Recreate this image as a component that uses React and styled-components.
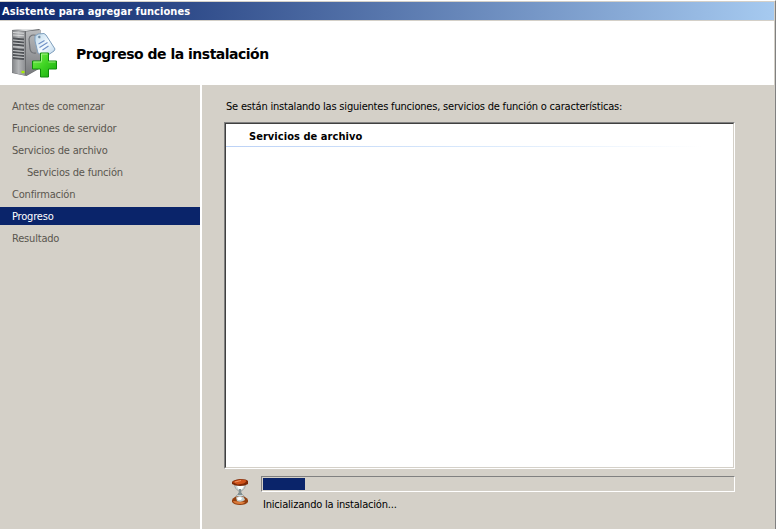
import React from "react";
import styled, { createGlobalStyle } from "styled-components";

const GlobalStyle = createGlobalStyle`
  * { box-sizing: border-box; }
  body {
    margin: 0;
    background: #d4d0c8;
    overflow: hidden;
    font-family: "DejaVu Sans Condensed", "DejaVu Sans", Tahoma, sans-serif;
    font-stretch: condensed;
    font-size: 11px;
    letter-spacing: -0.19px;
    color: #000;
  }
`;

const Window = styled.div`
  display: flex;
  flex-direction: column;
  width: 776px;
  height: 529px;
  border-top: 1px solid #fff;
  border-right: 1px solid #808080;
  padding: 1px 1px 0 0;
  background: #d4d0c8;
`;

const TitleBar = styled.div`
  height: 18px;
  flex: none;
  padding: 1px 0 0 2px;
  line-height: 18px;
  font-weight: bold;
  letter-spacing: 0.05px;
  color: #fff;
  background: linear-gradient(to right, #0a246a, #a6caf0);
`;

const Header = styled.header`
  display: flex;
  align-items: center;
  flex: none;
  height: 64px;
  margin-top: 1px;
  background: #fff;
`;

const ServerIcon = styled.svg`
  width: 48px;
  height: 50px;
  margin: 0 17px 0 11px;
`;

const Heading = styled.h1`
  margin: 1px 0 0;
  font-family: "DejaVu Sans", Tahoma, sans-serif;
  font-stretch: normal;
  font-size: 14px;
  letter-spacing: -0.5px;
  line-height: 20px;
  font-weight: bold;
  white-space: nowrap;
`;

const Body = styled.div`
  display: flex;
  flex: 1;
  min-height: 0;
`;

const Steps = styled.nav`
  display: flex;
  flex-direction: column;
  gap: 4px;
  width: 202px;
  padding-top: 12px;
  border-right: 2px solid #fff;
`;

const Step = styled.div`
  height: 18px;
  line-height: 18px;
  padding: 1px 0 0 ${(p) => (p.$nested ? 27 : 12)}px;
  color: ${(p) => (p.$active ? "#fff" : "#5a564f")};
  background: ${(p) => (p.$active ? "#0a246a" : "transparent")};
`;

const Main = styled.main`
  display: flex;
  flex-direction: column;
  width: 533px;
  padding: 12px 0 0 22px;
`;

const Intro = styled.div`
  height: 25px;
  padding: 1px 0 0 2px;
  line-height: 18px;
  white-space: nowrap;
`;

const RoleList = styled.div`
  height: 347px;
  flex: none;
  border: 1px solid;
  border-color: #808080 #fff #fff #808080;
`;

const RoleListInner = styled.div`
  height: 100%;
  border: 1px solid;
  border-color: #404040 #d4d0c8 #d4d0c8 #404040;
  background: #fff;
`;

const RoleTitle = styled.div`
  height: 22px;
  padding: 2px 0 0 23px;
  line-height: 22px;
  font-weight: bold;
  letter-spacing: 0.05px;
`;

const RoleRule = styled.div`
  height: 1px;
  background: linear-gradient(to right, #bcd2f6, #d9e9fc 50%, #fff 94%);
`;

const ProgressRow = styled.div`
  display: flex;
  margin-top: 7px;
`;

const Hourglass = styled.svg`
  flex: none;
  width: 16px;
  height: 26px;
  margin: 3px 13px 0 8px;
`;

const ProgressColumn = styled.div`
  flex: 1;
`;

const Track = styled.div`
  height: 16px;
  padding: 1px;
  border: 1px solid;
  border-color: #808080 #fff #fff #808080;
`;

const Fill = styled.div`
  width: 42px;
  height: 12px;
  background: #0a246a;
`;

const Status = styled.div`
  padding: 4px 0 0 2px;
  line-height: 18px;
`;

const steps = [
  { text: "Antes de comenzar" },
  { text: "Funciones de servidor" },
  { text: "Servicios de archivo" },
  { text: "Servicios de función", nested: true },
  { text: "Confirmación" },
  { text: "Progreso", active: true },
  { text: "Resultado" },
];

function AddRoleIcon() {
  return (
    <ServerIcon viewBox="0 0 48 50" aria-hidden="true">
      <defs>
        <linearGradient id="front" x1="0" x2="1">
          <stop offset="0" stopColor="#808285" />
          <stop offset="0.5" stopColor="#b4b6b8" />
          <stop offset="1" stopColor="#8f9194" />
        </linearGradient>
        <linearGradient id="side" x1="0" x2="0" y1="0" y2="1">
          <stop offset="0" stopColor="#b9bbbd" />
          <stop offset="0.5" stopColor="#999b9e" />
          <stop offset="1" stopColor="#77797c" />
        </linearGradient>
        <linearGradient id="tag" x1="0" x2="1" y1="0" y2="1">
          <stop offset="0" stopColor="#b9d6ea" />
          <stop offset="0.5" stopColor="#f4fafe" />
          <stop offset="1" stopColor="#b8d3e8" />
        </linearGradient>
        <linearGradient id="plus" x1="0" x2="1" y1="0" y2="1">
          <stop offset="0" stopColor="#7aee51" />
          <stop offset="0.5" stopColor="#3ed322" />
          <stop offset="1" stopColor="#14a80c" />
        </linearGradient>
      </defs>
      <path d="M1 2 11 1h17l1.5 1v38l-14 8L1 45z" fill="#6a6c6f" />
      <path d="M1 2 11 1h17l-13 2z" fill="#dfe1e2" />
      <path d="M1 2.5 14 3.5V47.5L1 44.5z" fill="url(#front)" />
      <path d="M15 3.5 29 2v38l-14 7.5z" fill="url(#side)" />
      <path d="M2 4.500l11 .8M2 7l11 .8" stroke="#dcdedf" strokeWidth=".9" />
      <path d="M2 10.500l11 1M2 13.500l11 1M2 16.500l11 1M2 21l11 1M2 24l11 1M2 27l11 1M2 30l11 1" stroke="#505357" strokeWidth="1.8" />
      <path d="M2 12l11 1M2 15l11 1M2 18.500l11 1M2 22.500l11 1M2 25.500l11 1M2 28.500l11 1" stroke="#c9cbcd" strokeWidth=".8" />
      <path d="M10.500 44h3" stroke="#a6f000" strokeWidth="2.4" />
      <path d="M27 8q-8-3-9 3l1 10q1 5 6 4" fill="none" stroke="#707377" strokeWidth="1.2" />
      <path d="M24 8 27 6l6-.5 2 1.500 9 14-1 2-9 6-7-4-3-12z" fill="url(#tag)" stroke="#7f9fbd" strokeWidth="1" strokeLinejoin="round" />
      <circle cx="28.300" cy="9" r="1.700" fill="#6f8ba3" stroke="#e9f5fb" strokeWidth=".6" />
      <path d="m27.500 16 6-3.500m-5 7 8-5m-5 7.500 6-4" stroke="#6f8fc6" strokeWidth="1.100" />
      <path d="M29.500 25h8v8h8v8h-8v8h-8v-8h-8v-8h8z" fill="url(#plus)" stroke="#0e8c0a" strokeWidth="1" />
      <path d="M30.500 33.500V26h6M22.500 34h8m7 0h7" fill="none" stroke="#b5f79b" strokeWidth=".8" />
    </ServerIcon>
  );
}

function HourglassIcon() {
  return (
    <Hourglass viewBox="0 0 16 26" aria-hidden="true">
      <path d="M2.500 5q0 5 4.500 7v2q-4.500 3-4.500 8h11q0-5-4.500-8v-2q4.500-2 4.500-7z" fill="#ccd6d7" stroke="#959b9b" strokeWidth=".8" />
      <path d="M5 7h7q-1 3-4 4-2-1-3-4z" fill="#f9ffff" />
      <path d="M7 10h2v4h1v2H6v-2h1z" fill="#829092" />
      <path d="M0 3q1-2 8-3 7 0 8 2v3q-3 2-8 2T0 5z" fill="#7d2906" />
      <path d="M.5 3q3-2 8-2.500 5 0 6 1.500-1 3-9 3.500z" fill="#cf5219" />
      <path d="M3 3 9 1.500" stroke="#f09463" strokeWidth="1" />
      <path d="M0 21q2-4 8-4t8 4v2q-2 3-8 3t-8-3z" fill="#94400f" />
      <path d="M1 22q1 3 7 3 4 0 5-2z" fill="#dc7b3b" />
      <path d="M4 18.500q4-3 8 0l1 2.500q-4 3-8 1z" fill="#c2d0d0" />
      <path d="M5 19q3-2 5 0l-1 2H6z" fill="#fff" />
    </Hourglass>
  );
}

export default function App() {
  return (
    <>
      <GlobalStyle />
      <Window>
        <TitleBar>Asistente para agregar funciones</TitleBar>
        <Header>
          <AddRoleIcon />
          <Heading>Progreso de la instalación</Heading>
        </Header>
        <Body>
          <Steps>
            {steps.map((s) => (
              <Step key={s.text} $nested={s.nested} $active={s.active}>
                {s.text}
              </Step>
            ))}
          </Steps>
          <Main>
            <Intro>
              Se están instalando las siguientes funciones, servicios de función o características:
            </Intro>
            <RoleList>
              <RoleListInner>
                <RoleTitle>Servicios de archivo</RoleTitle>
                <RoleRule />
              </RoleListInner>
            </RoleList>
            <ProgressRow>
              <HourglassIcon />
              <ProgressColumn>
                <Track><Fill /></Track>
                <Status>Inicializando la instalación...</Status>
              </ProgressColumn>
            </ProgressRow>
          </Main>
        </Body>
      </Window>
    </>
  );
}
